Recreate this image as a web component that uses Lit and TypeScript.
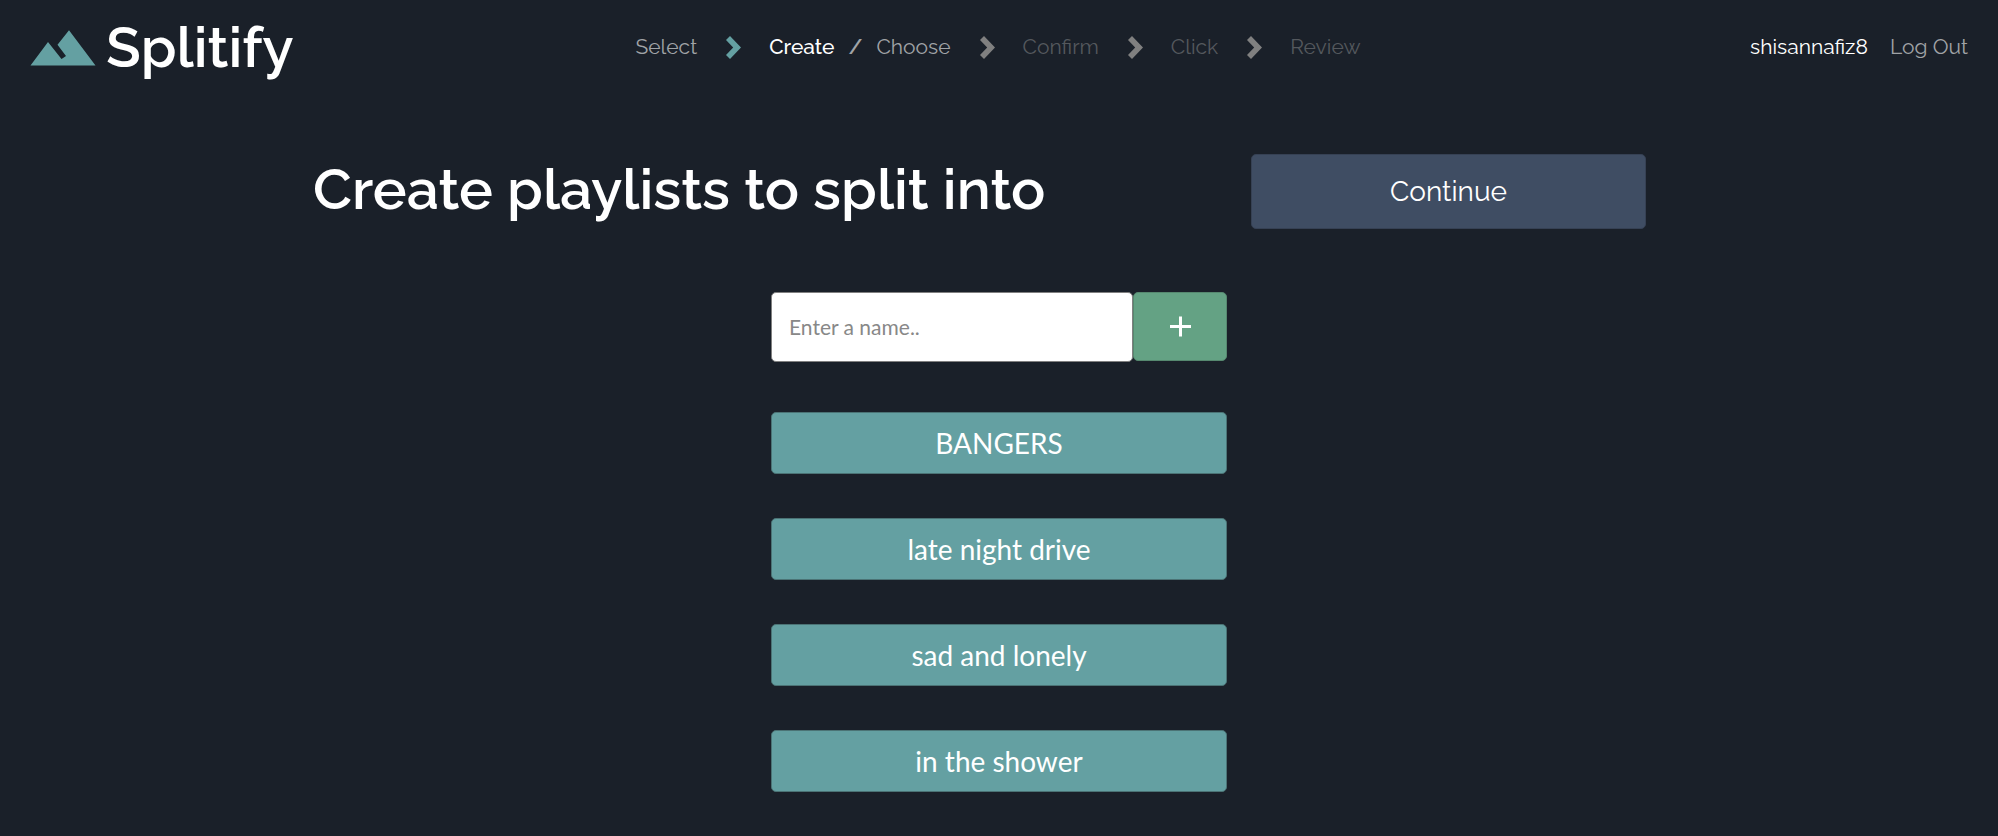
import { LitElement, html, css } from "lit";
import { customElement, property, state } from "lit/decorators.js";

@customElement("step-chevron")
class StepChevron extends LitElement {
  @property({ type: Boolean, reflect: true }) done = false;

  static styles = css`
    :host {
      display: block;
      color: #808080;
    }
    :host([done]) {
      color: #64a0a2;
    }
    .chevron {
      display: block;
      width: 15px;
      height: 23px;
    }
  `;

  render() {
    return html`<svg class="chevron" viewBox="0 0 15 23" aria-hidden="true">
      <path fill="currentColor" d="M0 4 4 0 15 11.5 4 23 0 19 7.2 11.5Z" />
    </svg>`;
  }
}

@customElement("site-header")
class SiteHeader extends LitElement {
  static styles = css`
    :host {
      display: block;
    }
    .bar {
      display: grid;
      grid-template-columns: 1fr auto 1fr;
      align-items: center;
      height: 94px;
      padding: 0 30px;
    }
    a {
      color: inherit;
      text-decoration: none;
    }
    .brand {
      display: flex;
      align-items: center;
      justify-self: start;
      gap: 10px;
      color: #fff;
      font-size: 57px;
      font-weight: 600;
      line-height: 64px;
    }
    .mark {
      display: block;
      width: 66px;
      height: 36px;
      margin-top: 2px;
    }
    .steps {
      display: flex;
      align-items: center;
      gap: 29px;
      margin: 0;
      padding: 0 2px 0 0;
      list-style: none;
    }
    .step {
      display: flex;
      align-items: center;
      gap: 28px;
      color: #a0a3a6;
    }
    .pair {
      display: flex;
      gap: 14px;
    }
    .slash {
      font-weight: 600;
    }
    .current {
      color: #fff;
      font-weight: 500;
    }
    .later {
      color: #54585d;
    }
    .account {
      display: flex;
      justify-self: end;
      align-items: center;
      gap: 22px;
      color: #a0a3a6;
    }
    .user {
      color: #fff;
    }
  `;

  render() {
    return html`<header class="bar">
      <a class="brand" href="#">
        <svg class="mark" viewBox="0 0 66 36" aria-hidden="true">
          <path fill="#64a0a2" d="M0.5 35.5 18 12 31.5 29 36 26 27.5 14.8 39 0.3 65.5 35.5Z" />
        </svg>
        <span>Splitify</span>
      </a>
      <nav aria-label="Progress">
        <ol class="steps">
          <li class="step"><a href="#select">Select</a></li>
          <li class="step">
            <step-chevron done></step-chevron>
            <span class="pair">
              <a class="current" href="#create" aria-current="step">Create</a>
              <span class="slash">/</span>
              <a href="#choose">Choose</a>
            </span>
          </li>
          ${["Confirm", "Click", "Review"].map(
            (name) => html`<li class="step">
              <step-chevron></step-chevron><span class="later">${name}</span>
            </li>`
          )}
        </ol>
      </nav>
      <div class="account">
        <span class="user">shisannafiz8</span>
        <a href="#logout">Log Out</a>
      </div>
    </header>`;
  }
}

@customElement("app-root")
class AppRoot extends LitElement {
  @state() private playlists = ["BANGERS", "late night drive", "sad and lonely", "in the shower"];

  static styles = css`
    :host {
      display: block;
      box-sizing: border-box;
      min-height: 100vh;
      background: #1a2029;
      color: #fff;
      font-family: Raleway, Lato, sans-serif;
      font-size: 21px;
      line-height: 26px;
    }
    *,
    *::before {
      box-sizing: border-box;
    }
    .heading {
      display: grid;
      grid-template-columns: 313fr 938fr 395fr 352fr;
      align-items: start;
      padding-top: 60px;
    }
    .title {
      grid-column: 2;
      margin: 0;
      font-size: 57px;
      font-weight: 600;
      line-height: 70px;
    }
    button {
      color: #fff;
      font: inherit;
      border-radius: 5px;
      cursor: pointer;
    }
    .continue {
      grid-column: 3;
      height: 75px;
      background: #3f4d63;
      border: 1px solid #364154;
      font-size: 28px;
      line-height: 32px;
    }
    .content {
      width: 456px;
      max-width: 100%;
      margin: 63px auto 0;
    }
    .entry {
      display: flex;
      align-items: flex-start;
    }
    .name {
      flex: 1;
      min-width: 0;
      height: 70px;
      padding: 0 17px 2px;
      background: #fff;
      border: 1px solid #808080;
      border-radius: 5px;
      color: #333;
      font-family: Lato, sans-serif;
      font-size: 21px;
    }
    .name::placeholder {
      color: #888;
      opacity: 1;
    }
    .add {
      display: grid;
      place-items: center;
      width: 94px;
      height: 69px;
      padding: 0;
      background: #64a284;
      border: 1px solid #56886f;
    }
    .plus {
      display: block;
      width: 21px;
      height: 21px;
    }
    .playlists {
      display: grid;
      gap: 44px;
      margin: 50px 0 0;
      padding: 0 0 44px;
      list-style: none;
    }
    .playlist {
      display: block;
      width: 100%;
      height: 62px;
      background: #64a0a2;
      border: 1px solid #4b7375;
      font-family: Lato, sans-serif;
      font-size: 28px;
      line-height: 36px;
    }
  `;

  private add(event: Event) {
    event.preventDefault();
    const form = event.target as HTMLFormElement;
    const name = String(new FormData(form).get("name") ?? "").trim();
    if (!name) return;
    this.playlists = [...this.playlists, name];
    form.reset();
  }

  private remove(index: number) {
    this.playlists = this.playlists.filter((_, i) => i !== index);
  }

  render() {
    return html`
      <site-header></site-header>
      <main>
        <div class="heading">
          <h1 class="title">Create playlists to split into</h1>
          <button class="continue" type="button">Continue</button>
        </div>
        <div class="content">
          <form class="entry" @submit=${this.add}>
            <input class="name" name="name" type="text" placeholder="Enter a name.." aria-label="Enter a name" autocomplete="off" />
            <button class="add" type="submit" aria-label="Add">
              <svg class="plus" viewBox="0 0 21 21" aria-hidden="true">
                <path fill="#fff" d="M9 0.5h3v8.5h9v3h-9v8.5h-3v-8.5h-9v-3h9Z" />
              </svg>
            </button>
          </form>
          <ul class="playlists">
            ${this.playlists.map(
              (name, i) => html`<li>
                <button class="playlist" type="button" @click=${() => this.remove(i)}>${name}</button>
              </li>`
            )}
          </ul>
        </div>
      </main>
    `;
  }
}
